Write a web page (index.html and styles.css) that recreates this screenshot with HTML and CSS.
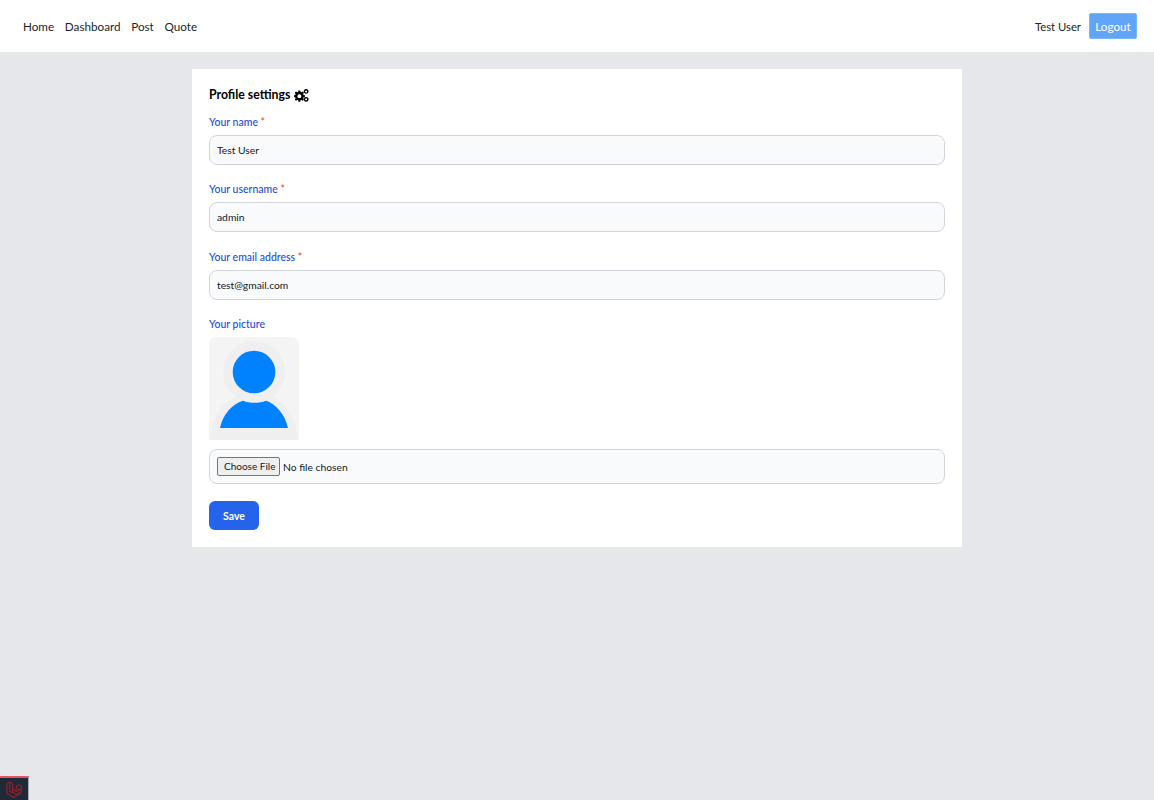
FILE: index.html
```html
<!DOCTYPE html>
<html lang="en">
<head>
  <meta charset="UTF-8" />
  <meta name="viewport" content="width=device-width, initial-scale=1.0"/>
  <title>Profile settings</title>
  <link rel="stylesheet" href="styles.css">
</head>
<body>

  <nav class="navbar">
    <ul class="nav-links">
      <li><a href="#">Home</a></li>
      <li><a href="#">Dashboard</a></li>
      <li><a href="#">Post</a></li>
      <li><a href="#">Quote</a></li>
    </ul>
    <div class="nav-user">
      <span class="user-name">Test User</span>
      <button class="logout-btn">Logout</button>
    </div>
  </nav>

  <main class="card">
    <h2 class="card-title">Profile settings
      <svg class="gears" viewBox="0 0 16 14" width="15" height="13" aria-hidden="true">
        <path fill-rule="evenodd" d="M4.800 1.500h1.800l.4 1.500 1 .5 1.400-.7 1.200 1.300-.8 1.300.4 1.100 1.500.3v1.800l-1.500.4-.4 1 .8 1.400-1.200 1.200-1.400-.8-1 .4-.4 1.500H4.800l-.4-1.500-1-.4-1.400.8L.8 11.400l.8-1.400-.4-1-1.200-.4V6.800l1.200-.3.400-1.100-.8-1.300L2 2.800l1.400.7 1-.5z M5.700 5.600a2.100 2.100 0 1 0 .01 0z"/>
        <path fill-rule="evenodd" d="M13 0a2.600 2.600 0 1 0 .01 0z M13 1.500a1.100 1.100 0 1 1-.01 0z"/>
        <path fill-rule="evenodd" d="M13 8.500a2.600 2.600 0 1 0 .01 0z M13 10a1.100 1.100 0 1 1-.01 0z"/>
      </svg>
    </h2>

    <form class="profile-form">
      <div class="field">
        <label>Your name <span class="req">*</span></label>
        <input type="text" class="text-input" value="Test User" />
      </div>
      <div class="field">
        <label>Your username <span class="req">*</span></label>
        <input type="text" class="text-input" value="admin" />
      </div>
      <div class="field">
        <label>Your email address <span class="req">*</span></label>
        <input type="text" class="text-input" value="test@gmail.com" />
      </div>
      <div class="field">
        <label>Your picture</label>
        <svg class="avatar" viewBox="0 0 90 103" width="90" height="103" aria-hidden="true">
          <circle cx="45" cy="35" r="31" fill="#efefef"/>
          <path d="M2 103C2 75 20 56 45 56s43 19 43 47z" fill="#efefef"/>
          <path d="M11 91C14 77 23 67 34 63.700 41 66.500 50 66.500 57 63.700 67 67 76 77 79 91z" fill="#0082ff"/>
          <circle cx="45" cy="35" r="21.300" fill="#0082ff"/>
        </svg>
        <div class="file-box">
          <input type="file" class="file-input" />
        </div>
      </div>
      <button type="button" class="save-btn">Save</button>
    </form>
  </main>

  <div class="debugbar">
    <svg viewBox="0 0 20 20" width="19" height="19" fill="none" stroke="#8f1f2b" stroke-width="1.300" stroke-linejoin="round" aria-hidden="true">
      <path d="M2 4l3-2 3 2v9l4 2.500 5-3V9l-5 3-4-2.500"/>
      <path d="M2 4v10l7 4.500 8-5"/>
      <path d="M5 2v10l3 1.500"/>
      <path d="M12 6.500l2.500-1.500 3 1.500V9l-2.500 1.500-3-1.500z"/>
    </svg>
  </div>

</body>
</html>
```

FILE: styles.css
```css
* {
  box-sizing: border-box;
  margin: 0;
  padding: 0;
}

body {
  font-family: 'Lato', 'Noto Sans', sans-serif;
  background-color: #e5e7eb;
  color: #111827;
  min-height: 800px;
}

.navbar {
  background-color: white;
  height: 52px;
  padding: 0 17px 0 23px;
  display: flex;
  justify-content: space-between;
  align-items: center;
  font-size: 11.700px;
}

.nav-links {
  list-style: none;
  display: flex;
  gap: 10.700px;
}

.nav-links a {
  color: #212529;
  text-decoration: none;
}

.nav-user {
  display: flex;
  align-items: center;
  gap: 8px;
  color: #212529;
}

.user-name {
  font-size: 11.300px;
}

.logout-btn {
  background-color: #60a5fa;
  color: white;
  font-family: inherit;
  font-size: 11.700px;
  width: 48px;
  height: 26px;
  border: 1px solid #7ab6fb;
  border-radius: 2px;
}

.card {
  width: 770px;
  margin: 17px auto 0;
  padding: 17px 17px 16.500px;
  background-color: white;
}

.card-title {
  font-size: 12.300px;
  font-weight: 700;
  color: black;
  line-height: 18px;
  margin-bottom: 11px;
  display: flex;
  align-items: center;
  gap: 4px;
}

.field {
  margin-bottom: 17.330px;
}

.field label {
  display: block;
  font-size: 10.500px;
  font-weight: 500;
  line-height: 14px;
  color: #1d4ed8;
  margin-bottom: 6px;
}

.req {
  color: #ef4444;
}

.text-input {
  display: block;
  width: 100%;
  height: 30px;
  padding: 0 7px;
  font-family: inherit;
  font-size: 10.300px;
  color: #111827;
  background-color: #f9fafb;
  border: 1px solid #d1d5db;
  border-radius: 8px;
}

.avatar {
  display: block;
  background-color: #f4f4f4;
  border-radius: 7px 7px 0 0;
  margin-bottom: 9px;
}

.file-box {
  height: 35px;
  padding: 0 7px;
  display: flex;
  align-items: center;
  background-color: #f9fafb;
  border: 1px solid #d1d5db;
  border-radius: 8px;
}

.file-input {
  font-family: inherit;
  font-size: 10.300px;
  color: #111827;
}

.file-input::file-selector-button {
  font-family: inherit;
  font-size: 10px;
  width: 63px;
  height: 19px;
  margin-right: 3px;
  background-color: #efefef;
  border: 1px solid #767676;
  border-radius: 2px;
  color: #111827;
}

.save-btn {
  display: block;
  width: 50px;
  height: 29px;
  background-color: #2563eb;
  color: white;
  font-family: inherit;
  font-size: 10.500px;
  font-weight: 700;
  border: none;
  border-radius: 6px;
}

.debugbar {
  position: fixed;
  left: 0;
  bottom: 0;
  width: 29px;
  height: 24px;
  background-color: #1f2937;
  border-top: 2px solid #e25561;
  border-right: 1px solid #a3a8b2;
  display: flex;
  align-items: center;
  justify-content: center;
}

.gears {
  fill: black;
}
```
